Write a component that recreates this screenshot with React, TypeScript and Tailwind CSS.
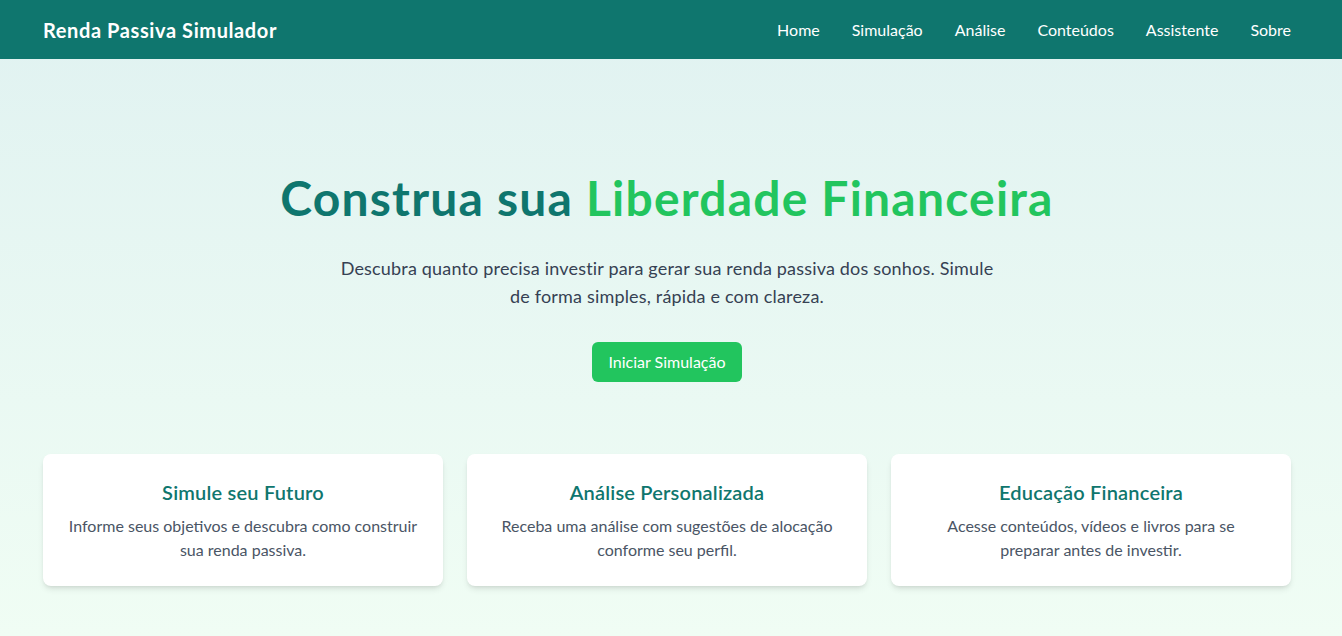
const navLinks = ['Home', 'Simulação', 'Análise', 'Conteúdos', 'Assistente', 'Sobre'];

const features = [
  {
    title: 'Simule seu Futuro',
    text: 'Informe seus objetivos e descubra como construir sua renda passiva.',
  },
  {
    title: 'Análise Personalizada',
    text: 'Receba uma análise com sugestões de alocação conforme seu perfil.',
  },
  {
    title: 'Educação Financeira',
    text: 'Acesse conteúdos, vídeos e livros para se preparar antes de investir.',
  },
];

export default function App() {
  return (
    <div className="min-h-screen flex flex-col bg-gradient-to-b from-[#e0f2f1] to-[#f0fdf4] font-['Lato',sans-serif]">
      {/* Navbar */}
      <header className="bg-[#0f766e] text-white">
        <div className="mr-2 px-[43px] h-[59px] flex items-center justify-between">
          <span className="text-xl font-bold tracking-[0.03em]">Renda Passiva Simulador</span>
          <nav className="flex items-center gap-8">
            {navLinks.map((link) => (
              <a key={link} href="#" className="text-base hover:text-green-200 transition-colors">
                {link}
              </a>
            ))}
          </nav>
        </div>
      </header>

      {/* Hero */}
      <main className="flex-1 mr-2">
        <section className="pt-[115px] pb-18 px-4 text-center">
          <h1 className="text-5xl leading-none font-bold tracking-[0.025em] text-[#0f766e] mb-8">
            Construa sua <span className="text-[#22c55e]">Liberdade Financeira</span>
          </h1>
          <p className="text-lg tracking-[0.01em] text-gray-700 max-w-2xl mx-auto mb-8">
            Descubra quanto precisa investir para gerar sua renda passiva dos sonhos. Simule de forma simples, rápida e com clareza.
          </p>
          <button className="px-4 py-2 bg-[#22c55e] text-white rounded-md hover:bg-green-600 transition-colors cursor-pointer">
            Iniciar Simulação
          </button>
        </section>

        {/* Feature cards */}
        <section className="px-[43px] grid grid-cols-3 gap-6 pb-12">
          {features.map((f) => (
            <div key={f.title} className="bg-white rounded-lg shadow-md p-6 text-center">
              <h3 className="text-xl font-semibold tracking-[0.01em] text-[#0f766e] mb-2">{f.title}</h3>
              <p className="text-gray-600 leading-6 max-w-[350px] mx-auto">{f.text}</p>
            </div>
          ))}
        </section>
      </main>
    </div>
  );
}
